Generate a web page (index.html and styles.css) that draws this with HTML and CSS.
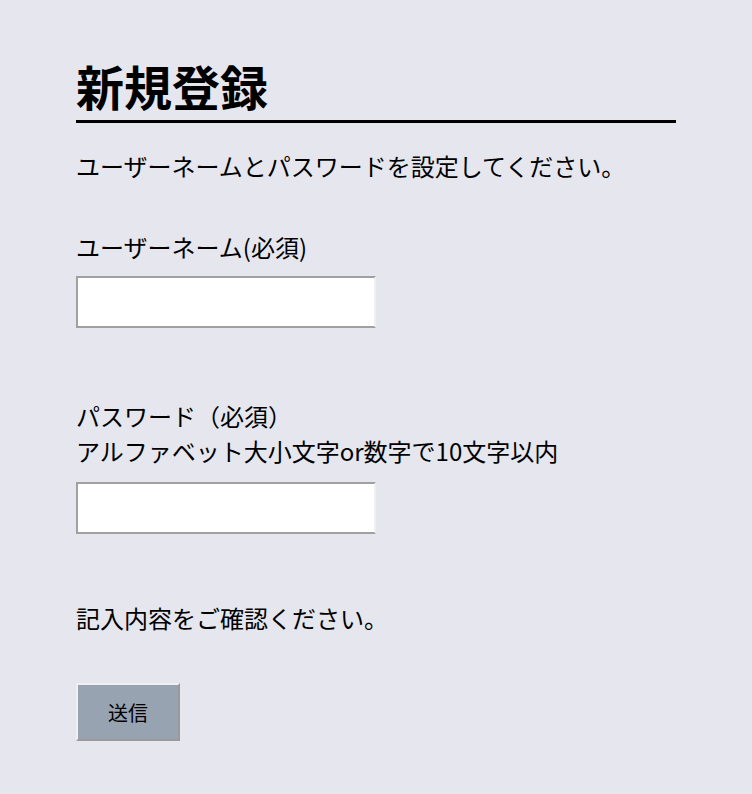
FILE: index.html
```html
<!DOCTYPE html>
<html lang="ja">
<head>
<meta charset="utf-8">
<title>新規登録</title>
<link rel="stylesheet" href="styles.css">
</head>
<body>
<main class="page">
  <h1 class="title">新規登録</h1>
  <p class="lead">ユーザーネームとパスワードを設定してください。</p>
  <form class="form">
    <div class="field">
      <label class="label" for="username">ユーザーネーム(必須)</label>
      <input class="input" id="username" type="text">
    </div>
    <div class="field field-pass">
      <label class="label" for="password">パスワード（必須）<br>アルファベット大小文字or数字で10文字以内</label>
      <input class="input input-pass" id="password" type="password">
    </div>
    <p class="confirm">記入内容をご確認ください。</p>
    <button class="submit" type="button">送信</button>
  </form>
</main>
</body>
</html>
```

FILE: styles.css
```css
html, body {
  margin: 0;
  padding: 0;
  background: #e5e6ee;
}
body {
  font-family: "Noto Sans CJK JP", "Noto Sans", sans-serif;
  color: #000;
}
.page {
  width: 600px;
  margin: 0 auto;
  padding-top: 55px;
}
.title {
  margin: 0;
  font-size: 48px;
  font-weight: 700;
  line-height: 60px;
  padding-bottom: 5px;
  border-bottom: 3px solid #000;
}
.lead {
  margin: 25px 0 0;
  font-size: 24px;
  line-height: 35px;
}
.form {
  margin: 0;
}
.field {
  margin-top: 46px;
}
.field-pass {
  margin-top: 70px;
}
.label {
  display: block;
  font-size: 24px;
  line-height: 35px;
}
.input {
  display: block;
  box-sizing: border-box;
  width: 300px;
  height: 52px;
  margin-top: 12px;
  background: #fff;
  border-style: solid;
  border-width: 2px;
  border-color: #a0a0a0 #efefef #a0a0a0 #a0a0a0;
  padding: 0 8px;
  font-size: 20px;
  outline: none;
}
.input-pass {
  margin-top: 14px;
}
.confirm {
  margin: 66px 0 0;
  font-size: 24px;
  line-height: 35px;
}
.submit {
  display: block;
  box-sizing: border-box;
  margin-top: 48px;
  width: 104px;
  height: 58px;
  background: #97a3b0;
  border-style: solid;
  border-width: 2px;
  border-color: #f0f0f0 #999 #999 #f0f0f0;
  font-family: "Noto Sans CJK JP", "Noto Sans", sans-serif;
  font-size: 20px;
  color: #000;
  padding: 0;
}
```
